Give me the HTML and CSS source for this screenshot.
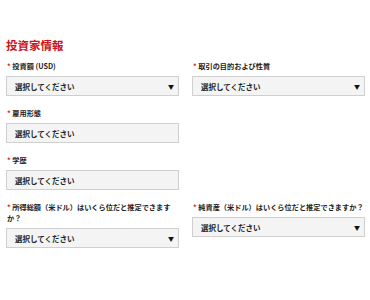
FILE: index.html
```html
<!DOCTYPE html>
<html lang="ja">
<head>
<meta charset="utf-8">
<link rel="stylesheet" href="styles.css">
</head>
<body>
<div class="page">
  <h2 class="title">投資家情報</h2>
  <div class="grid">
    <div class="field">
      <div class="label"><span class="req">*</span> 投資額 (USD)</div>
      <div class="select"><span>選択してください</span><span class="arrow">▼</span></div>
    </div>
    <div class="field">
      <div class="label"><span class="req">*</span> 取引の目的および性質</div>
      <div class="select"><span>選択してください</span><span class="arrow">▼</span></div>
    </div>
    <div class="field">
      <div class="label"><span class="req">*</span> 雇用形態</div>
      <div class="select"><span>選択してください</span></div>
    </div>
    <div class="field empty"></div>
    <div class="field">
      <div class="label"><span class="req">*</span> 学歴</div>
      <div class="select"><span>選択してください</span></div>
    </div>
    <div class="field empty"></div>
    <div class="field">
      <div class="label"><span class="req">*</span> 所得総額（米ドル）はいくら位だと推定できますか？</div>
      <div class="select"><span>選択してください</span><span class="arrow">▼</span></div>
    </div>
    <div class="field">
      <div class="label"><span class="req">*</span> 純資産（米ドル）はいくら位だと推定できますか？</div>
      <div class="select"><span>選択してください</span><span class="arrow">▼</span></div>
    </div>
  </div>
</div>
</body>
</html>
```
FILE: styles.css
```css
html, body {
  margin: 0;
  padding: 0;
  background: #fff;
}
body {
  font-family: "Noto Sans CJK JP", "Noto Sans", sans-serif;
  color: #333;
}
.page {
  padding: 37px 5px 0 6px;
}
.title {
  margin: 0 0 8px 0;
  font-size: 11.5px;
  line-height: 16px;
  font-weight: 700;
  color: #c8141e;
}
.grid {
  display: grid;
  grid-template-columns: 173px 173px;
  column-gap: 13px;
  row-gap: 12px;
  align-items: start;
}
.field {
  display: flex;
  flex-direction: column;
  gap: 4px;
}
.label {
  font-size: 7.2px;
  line-height: 11px;
  font-weight: 700;
  color: #222;
  padding-left: 1px;
}
.req {
  color: #d0202a;
}
.select {
  box-sizing: border-box;
  height: 20px;
  border: 1px solid #cfcfcf;
  background: #f4f4f4;
  display: flex;
  align-items: center;
  justify-content: space-between;
  padding: 0 4px 0 8px;
  font-size: 7.5px;
  font-weight: 700;
  color: #222;
}
.arrow {
  font-size: 6px;
  color: #111;
}
```
